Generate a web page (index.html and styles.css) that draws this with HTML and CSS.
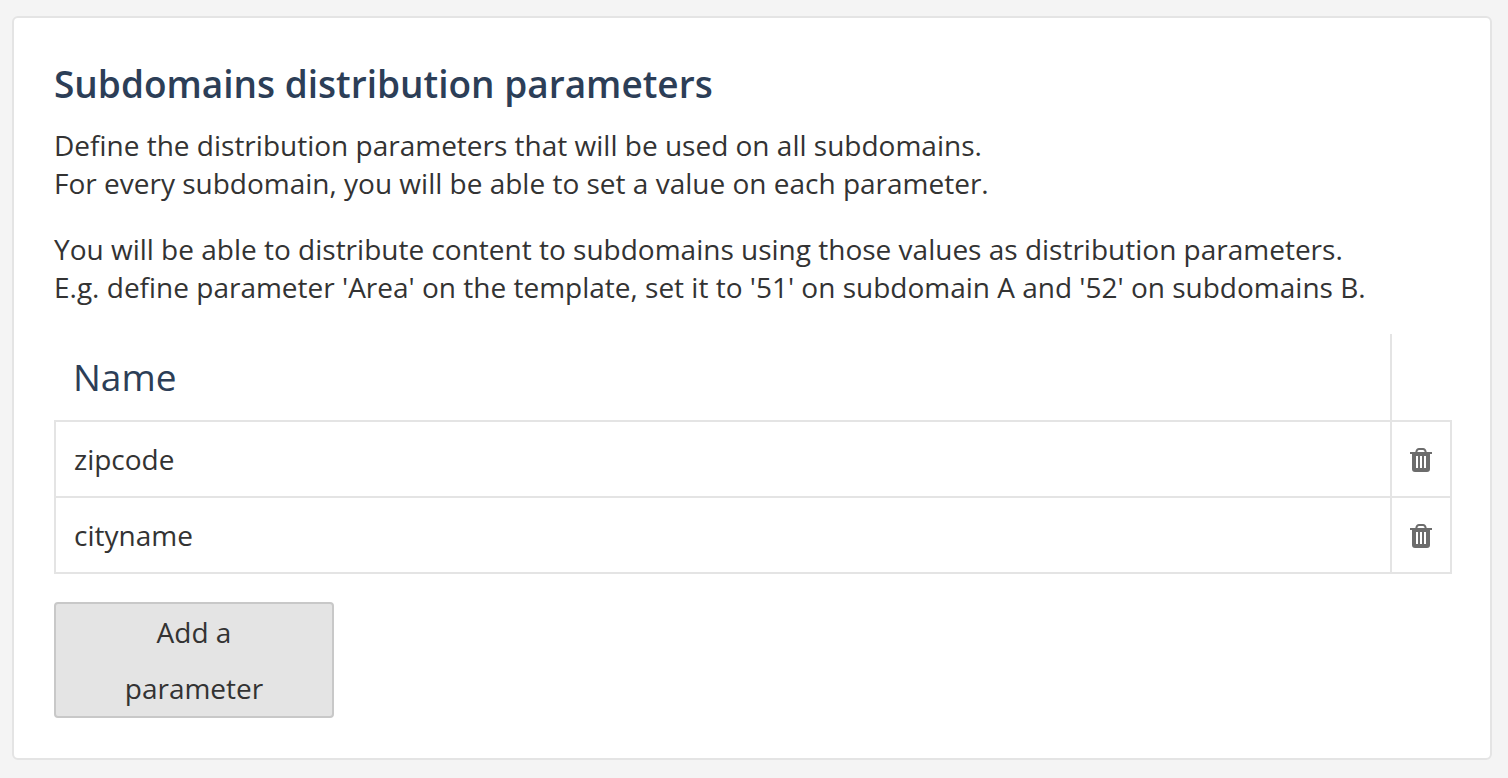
FILE: index.html
```html
<!DOCTYPE html>
<html lang="en">
<head>
<meta charset="utf-8">
<title>Subdomains distribution parameters</title>
<link rel="stylesheet" href="styles.css">
</head>
<body>
<main class="panel">
  <h1 class="title">Subdomains distribution parameters</h1>
  <p class="text">Define the distribution parameters that will be used on all subdomains.<br>For every subdomain, you will be able to set a value on each parameter.</p>
  <p class="text">You will be able to distribute content to subdomains using those values as distribution parameters.<br>E.g. define parameter 'Area' on the template, set it to '51' on subdomain A and '52' on subdomains B.</p>
  <table class="params">
    <thead>
      <tr><th class="name" scope="col">Name</th><td class="action"></td></tr>
    </thead>
    <tbody>
      <tr>
        <td class="name">zipcode</td>
        <td class="action"><button class="delete" type="button" aria-label="Delete zipcode"><svg class="icon" viewBox="0 0 22 24"><path fill="currentColor" fill-rule="evenodd" d="M0 4h5.300Q6 0 9 0h4q3 0 3.700 4H22v2h-2v15q0 3-3 3H5q-3 0-3-3V6H0zM7.300 4h7.400Q14.300 2 13 2H9Q7.700 2 7.300 4zM6 8v12h2V8zM10 8v12h2V8zM14 8v12h2V8z"/></svg></button></td>
      </tr>
      <tr>
        <td class="name">cityname</td>
        <td class="action"><button class="delete" type="button" aria-label="Delete cityname"><svg class="icon" viewBox="0 0 22 24"><path fill="currentColor" fill-rule="evenodd" d="M0 4h5.300Q6 0 9 0h4q3 0 3.700 4H22v2h-2v15q0 3-3 3H5q-3 0-3-3V6H0zM7.300 4h7.400Q14.300 2 13 2H9Q7.700 2 7.300 4zM6 8v12h2V8zM10 8v12h2V8zM14 8v12h2V8z"/></svg></button></td>
      </tr>
    </tbody>
  </table>
  <button class="add" type="button">Add a parameter</button>
</main>
</body>
</html>
```
FILE: styles.css
```css
* { box-sizing: border-box; }
body {
  margin: 0;
  padding: 16px 16px 18px 12px;
  background: #f4f4f4;
  color: #333;
  font: 28px/38px "Open Sans", sans-serif;
}
.panel {
  padding: 40px 38px 40px 40px;
  background: #fff;
  border: 2px solid #e4e4e4;
  border-radius: 6px;
}
.title {
  margin: 0 0 16px;
  color: #2c3e57;
  font-size: 37px;
  font-weight: 600;
  line-height: 52px;
}
.text { margin: 0 0 28px; }
.params {
  width: 100%;
  border-collapse: collapse;
}
.params td, .params th { padding: 0; }
.params tbody td { height: 76px; border: 2px solid #e4e4e4; }
.params thead .name {
  height: 87px;
  color: #2c3e57;
  font-size: 37px;
  font-weight: 400;
  text-align: left;
}
.params .name { padding-left: 18px; }
.params .action {
  width: 60px;
  border-left: 2px solid #e4e4e4;
}
.delete {
  display: flex;
  margin: 0 auto;
  padding: 2px 0 0;
  border: 0;
  background: none;
  color: #6c6c6c;
  cursor: pointer;
}
.icon { width: 22px; height: 24px; }
.add {
  display: block;
  width: 280px;
  margin-top: 28px;
  padding: 0 60px;
  background: #e4e4e4;
  border: 2px solid #c8c8c8;
  border-radius: 4px;
  color: inherit;
  font: inherit;
  line-height: 56px;
  cursor: pointer;
}
```
